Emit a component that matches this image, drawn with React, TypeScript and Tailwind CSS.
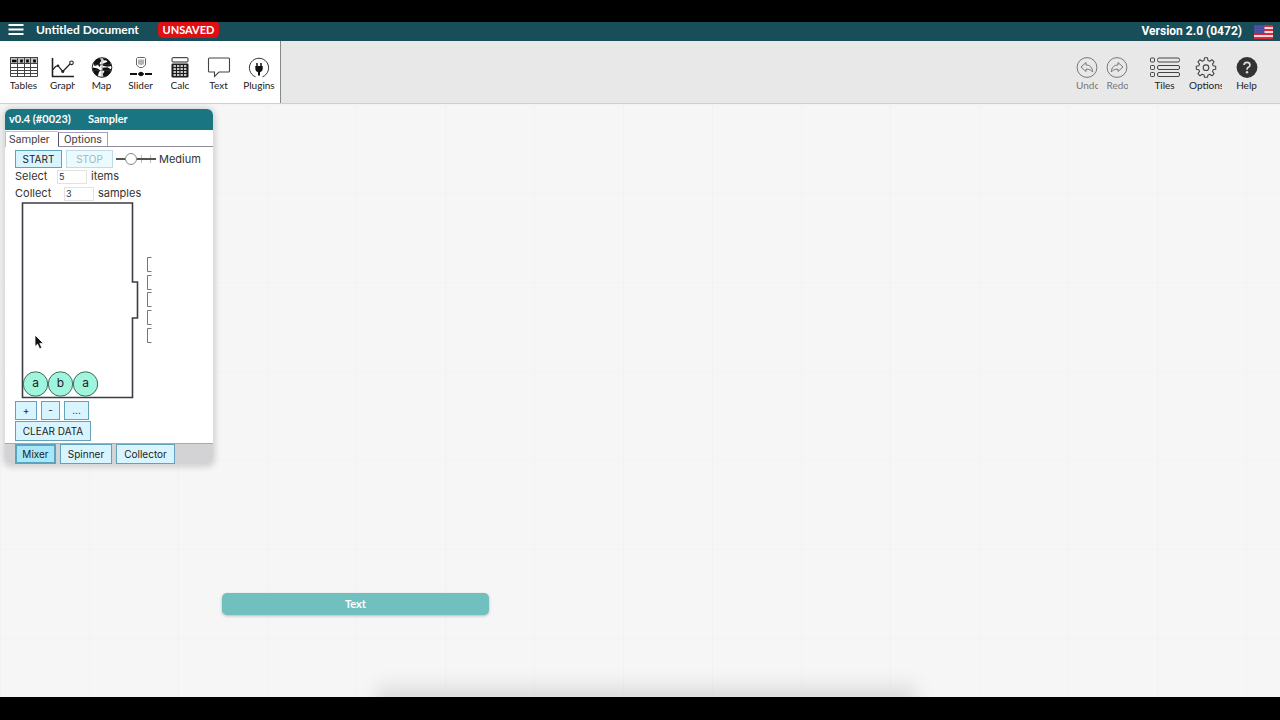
import type { ReactNode } from "react";

function TablesIcon() {
  return (
    <svg width="28" height="21" viewBox="0 0 28 21" fill="none" stroke="#444" strokeWidth="1">
      <rect x="0.5" y="0.5" width="27" height="6" fill="#c4c4c4" />
      <path d="M0.5 6.500h27v13h-27zM0.5 10.500h27M0.5 13.500h27M0.5 16.500h27M7.500 0.500v19M14.500 0.500v19M20.500 0.500v19" />
      <path d="M2 4h4.500M11.500 2.500v3M17.500 2.500v3M24.500 2.500v3" stroke="#000" strokeWidth="2.600" />
    </svg>
  );
}

function GraphIcon() {
  return (
    <svg width="24" height="21" viewBox="0 0 24 21" fill="none" stroke="#222">
      <path d="M1.500 1v18.500h21.500" strokeWidth="1.600" />
      <path d="M2 12.500 4.500 9.500 7 8.700 11.700 14.500 19 7" strokeWidth="1.200" />
      <circle cx="7" cy="8.800" r="1.200" fill="#222" stroke="none" />
      <circle cx="11.800" cy="14.400" r="1.500" fill="#222" stroke="none" />
      <circle cx="20.500" cy="5.800" r="1.800" strokeWidth="1.100" fill="#fff" />
    </svg>
  );
}

function MapIcon() {
  return (
    <svg width="22" height="21" viewBox="0 0 22 21">
      <circle cx="11" cy="10.500" r="9.800" fill="#fff" stroke="#222" strokeWidth="1" />
      <path
        fill="#111"
        d="M8.500 1 5 2.800 2.300 6.500 3.500 9 7 8l1.500 2 1.200-2L8.500 6.200l1.700-2.300L9.500 2zM12 1l.6 2.500 2.400-.3 1.500 1.600-3 1.200-1.800.7.2 2.100 3.400.7H18l2.400-.8L18.500 4.200l-3-2.500zM1.800 10.500l4 .8 3.500 2-1.700 2.700L7 19.300 3.800 17 1.800 13.500zM11.500 10.800l5-.5 3 2 .9-.8-1 4-3 3.200-3.900 1.300-.7-3 1.600-2.400-2-1.800z"
      />
      <path d="M2.500 7.500h17M2 13.500h18M11 1v19" fill="none" stroke="#444" strokeWidth="0.500" />
    </svg>
  );
}

function SliderIcon() {
  return (
    <svg width="24" height="21" viewBox="0 0 24 21" fill="none" stroke="#555">
      <path d="M8.500 0.500h7l1 1v6.500l-3 2.500h-3l-3-2.500v-6.500z" strokeWidth="0.900" />
      <path d="M10 2.500v5M12 2.500v5.500M14 2.500v5" strokeWidth="0.900" />
      <path d="M1 17h7M16 17h7" stroke="#111" strokeWidth="2" />
      <path d="M9 17h6" stroke="#111" strokeWidth="1.500" />
      <circle cx="12" cy="17" r="2.300" fill="#111" stroke="none" />
    </svg>
  );
}

function CalcIcon() {
  return (
    <svg width="18" height="21" viewBox="0 0 18 21">
      <rect x="1" y="0.700" width="16" height="4.300" rx="1" fill="#fff" stroke="#222" />
      <rect x="0.500" y="6.500" width="17" height="14" rx="1.200" fill="#1c1c1c" />
      <path d="M2.500 9h13M2.500 12h13M2.500 15h13M2.500 18h13" stroke="#fff" strokeWidth="1.700" strokeDasharray="2.400 1.100" />
    </svg>
  );
}

function TextIcon() {
  return (
    <svg width="24" height="21" viewBox="0 0 24 21" fill="none" stroke="#444">
      <path d="M2.500 1h19q1 0 1 1v12q0 1-1 1H12L7.500 19.500V15H2.500q-1 0-1-1V2q0-1 1-1z" strokeWidth="1.100" />
    </svg>
  );
}

function PluginsIcon() {
  return (
    <svg width="22" height="21" viewBox="0 0 22 21">
      <path d="M7.500 19.800A9.600 9.600 0 1 1 14.500 19.800" fill="none" stroke="#333" strokeWidth="1" />
      <path d="M9 6v4M13 6v4" stroke="#111" strokeWidth="1.500" />
      <path d="M7.300 9h7.400v3q0 2.500-2.700 3.200V18.500h-2v-3.300q-2.700-.7-2.700-3.200z" fill="#111" />
    </svg>
  );
}

function ArrowIcon({ flip = false }: { flip?: boolean }) {
  return (
    <svg width="22" height="21" viewBox="0 0 22 21" fill="none" stroke="#777" strokeWidth="1">
      <circle cx="11" cy="10.500" r="9.900" />
      <path
        strokeLinejoin="round"
        transform={flip ? "matrix(-1 0 0 1 22 0)" : undefined}
        d="M5 10 10 5.500v2.500c4 0 6.500 2.500 6.700 7-1.500-2-3.700-3-6.700-2.800V14.500z"
      />
    </svg>
  );
}

function TilesIcon() {
  return (
    <svg width="30" height="21" viewBox="0 0 30 21" fill="none" stroke="#444" strokeWidth="1">
      {[1.5, 9, 16].map((y) => (
        <g key={y}>
          <rect x="0.500" y={y - 0.5} width="4" height="4" rx="0.800" />
          <rect x="7.500" y={y - 0.5} width="22" height="4" rx="1.500" />
        </g>
      ))}
    </svg>
  );
}

function GearIcon() {
  return (
    <svg width="22" height="21" viewBox="0 0.500 22 21" fill="none" stroke="#444" strokeWidth="1.100" strokeLinejoin="round">
      <path d="M9.500 1.300h3l.5 2.800 1.700.7 2.300-1.600 2.100 2.100-1.600 2.300.7 1.700 2.500.4v3l-2.500.5-.7 1.700 1.600 2.300-2.100 2.100-2.300-1.600-1.700.7-.5 2.400h-3L9 18.400l-1.700-.7L5 19.300l-2.100-2.100 1.600-2.300-.7-1.700-2.500-.5v-3l2.500-.4.7-1.700-1.600-2.300L5 3.200l2.300 1.600L9 4.100z" />
      <circle cx="11" cy="11.200" r="2.800" />
    </svg>
  );
}

function HelpIcon() {
  return (
    <svg width="22" height="21" viewBox="0 0.500 22 21" fill="none">
      <circle cx="11" cy="11" r="10.400" fill="#333" />
      <path d="M8 8.500Q8.200 5.800 11 5.800T14 8.400Q14 10 12.300 10.800 11 11.500 11 13.200" stroke="#ddd" strokeWidth="1.700" />
      <circle cx="11" cy="15.800" r="1.200" fill="#ddd" />
    </svg>
  );
}

function Flag() {
  return (
    <svg width="19" height="14" viewBox="0 0 20 14" preserveAspectRatio="none">
      <rect width="20" height="14" fill="#f3d9dc" />
      <path d="M0 1h20M0 5h20M0 9h20M0 13h20" stroke="#d92a3c" strokeWidth="2" />
      <rect width="11" height="9" fill="#4a4a9c" />
      <path d="M1 2h9M1 4.500h9M1 7h9" stroke="#7474b8" strokeWidth="0.700" strokeDasharray="1 1" />
    </svg>
  );
}

type ToolProps = { label: string; icon: ReactNode; width: string; labelWidth?: string; muted?: boolean };

function Tool({ label, icon, width, labelWidth = "", muted = false }: ToolProps) {
  return (
    <button type="button" className={`flex flex-col items-center ${width}`}>
      {icon}
      <span
        className={`block overflow-hidden text-left text-[10px] leading-[14px] whitespace-nowrap ${labelWidth} ${
          muted ? "text-[#777]" : "text-[#222]"
        }`}
      >
        {label}
      </span>
    </button>
  );
}

const plainButton = "border border-[#62a3bb] bg-[#d8f5ff] text-[10px] text-[#222] whitespace-nowrap";

function Mixer() {
  const balls = [
    { x: 20.5, label: "a" },
    { x: 45.5, label: "b" },
    { x: 70.5, label: "a" },
  ];
  return (
    <svg width="140" height="197" viewBox="0 0 140 197" className="block">
      <path d="M7.500 1H117.500V80H122.500V116H117.500V195.500H7.500Z" fill="#fff" stroke="#3c3c44" strokeWidth="1.600" />
      {[56, 74, 91, 109, 127].map((y) => (
        <path key={y} d={`M136.500 ${y - 0.5}h-4v14h4`} fill="none" stroke="#777" strokeWidth="1" />
      ))}
      {balls.map((ball) => (
        <g key={ball.x}>
          <circle cx={ball.x} cy="182" r="12.200" fill="#a0f6dc" stroke="#3f6b60" strokeWidth="1" />
          <text x={ball.x} y="185" textAnchor="middle" fontSize="12" fill="#222">
            {ball.label}
          </text>
        </g>
      ))}
    </svg>
  );
}

function SamplerWindow() {
  return (
    <section
      aria-label="Sampler"
      className="absolute top-[5px] left-[5px] w-52 overflow-hidden rounded-md bg-white font-['Inter',sans-serif] text-[11px] text-[#333] shadow-[0_1px_6px_2px_rgba(0,0,0,0.16)]"
    >
      <header className="flex h-[21px] items-center bg-[#1a7582] pl-1 font-['Lato',sans-serif] text-[11px] font-bold text-white">
        <span className="w-[79px]">v0.4 (#0023)</span>
        <h2>Sampler</h2>
      </header>
      <div role="tablist" className="flex h-[17px] items-end border-b border-[#8f8b9c] font-['Roboto',sans-serif] text-[#444]">
        <button type="button" role="tab" aria-selected="true" className="-mb-px h-4 w-[53px] border-t border-l border-[#c5bed2] bg-white pl-[3px] text-left leading-[14px]">
          Sampler
        </button>
        <button type="button" role="tab" aria-selected="false" className="h-[14px] w-[50px] border border-b-0 border-[#a79dc0] border-l-[#554f68] leading-[14px]">
          Options
        </button>
      </div>
      <div className="px-[10px] pt-[3px] pb-[2px]">
        <div className="flex h-[18px] items-center">
          <button type="button" className={`${plainButton} h-[18px] w-[47px]`}>START</button>
          <button type="button" disabled className="ml-1 h-[18px] w-[47px] border border-[#bfdbe3] bg-[#eafaff] text-[10px] text-[#a5b5b9]">
            STOP
          </button>
          <input
            id="speed"
            type="range"
            min="0"
            max="3"
            defaultValue="1"
            aria-label="Speed"
            className="ml-[3px] h-[14px] w-10 appearance-none bg-[linear-gradient(#555,#555),linear-gradient(#bbb,#bbb),linear-gradient(#bbb,#bbb)] bg-[length:100%_2px,1px_8px,1px_8px] bg-[position:0_center,25px_center,34px_center] bg-no-repeat [&::-webkit-slider-thumb]:h-3 [&::-webkit-slider-thumb]:w-3 [&::-webkit-slider-thumb]:appearance-none [&::-webkit-slider-thumb]:rounded-full [&::-webkit-slider-thumb]:border [&::-webkit-slider-thumb]:border-[#888] [&::-webkit-slider-thumb]:bg-white"
          />
          <label htmlFor="speed" className="ml-[3px]">Medium</label>
        </div>
        <div className="flex h-[17px] items-center">
          <label htmlFor="items" className="w-[42px]">Select</label>
          <input id="items" defaultValue="5" className="h-[14px] w-[30px] border border-[#e2e2e2] px-px text-[9px]" />
          <span className="ml-1">items</span>
        </div>
        <div className="flex h-[17px] items-center">
          <label htmlFor="samples" className="w-[49px]">Collect</label>
          <input id="samples" defaultValue="3" className="h-[14px] w-[30px] border border-[#e2e2e2] px-px text-[9px]" />
          <span className="ml-1">samples</span>
        </div>
        <Mixer />
        <div className="mt-[2px] flex gap-1">
          <button type="button" className={`${plainButton} h-[19px] w-[22px]`}>+</button>
          <button type="button" className={`${plainButton} h-[19px] w-[19px]`}>-</button>
          <button type="button" className={`${plainButton} h-[19px] w-[25px]`}>...</button>
        </div>
        <button type="button" className={`${plainButton} mt-px block h-5 w-[76px]`}>CLEAR DATA</button>
      </div>
      <footer className="flex h-[21px] items-start gap-1 border-t border-[#a9a9b0] bg-[#d3d3d6] pl-[10px]">
        <button type="button" className="h-5 w-[41px] border-2 border-[#5aa5bd] bg-[#a6e8fa] text-[10px] text-[#222]">Mixer</button>
        <button type="button" className={`${plainButton} h-5 w-[52px]`}>Spinner</button>
        <button type="button" className={`${plainButton} h-5 w-[59px]`}>Collector</button>
      </footer>
    </section>
  );
}

export default function App() {
  return (
    <div className="flex min-h-screen flex-col bg-black pt-[22px] pb-[23px] font-['Lato','Open_Sans',sans-serif]">
      <header className="flex h-[19px] items-center bg-[#184e5a] pr-[7px] pl-2 text-white">
        <button type="button" aria-label="Menu" className="-mt-1">
          <svg width="16" height="13" viewBox="0 0 16 13" stroke="#fff" strokeWidth="2">
            <path d="M0.500 2h15M0.500 6.500h15M0.500 11h15" />
          </svg>
        </button>
        <h1 className="-mt-[3px] ml-3 w-[122px] text-[12px] font-bold whitespace-nowrap">Untitled Document</h1>
        <span className="-mt-[3px] flex h-4 w-[61px] items-center justify-center rounded-b-[5px] rounded-t-[3px] bg-[#e00f14] text-[11px] font-bold">
          UNSAVED
        </span>
        <span className="-mt-px ml-auto font-['Roboto',sans-serif] text-[12px] font-bold">Version 2.0 (0472)</span>
        <button type="button" aria-label="Language" className="ml-3">
          <Flag />
        </button>
      </header>

      <nav className="flex h-[63px] justify-between border-b border-[#cfcfcf] bg-[#e8e8e8]">
        <div className="flex items-start border-r border-[#888] bg-white pt-4 pl-1">
          <Tool label="Tables" icon={<TablesIcon />} width="w-[39px]" />
          <Tool label="Graph" icon={<GraphIcon />} width="w-[39px]" labelWidth="w-[25px]" />
          <Tool label="Map" icon={<MapIcon />} width="w-[39px]" />
          <Tool label="Slider" icon={<SliderIcon />} width="w-[39px]" />
          <Tool label="Calc" icon={<CalcIcon />} width="w-[39px]" labelWidth="w-[18px]" />
          <Tool label="Text" icon={<TextIcon />} width="w-[39px]" />
          <Tool label="Plugins" icon={<PluginsIcon />} width="w-[42px]" />
        </div>
        <div className="flex items-start pt-4 pr-[13px]">
          <Tool label="Undo" icon={<ArrowIcon />} width="w-[30px]" labelWidth="w-[22px]" muted />
          <Tool label="Redo" icon={<ArrowIcon flip />} width="w-[30px]" labelWidth="w-[21px]" muted />
          <div className="ml-3 flex">
            <Tool label="Tiles" icon={<TilesIcon />} width="w-[41px]" />
            <Tool label="Options" icon={<GearIcon />} width="w-[41px]" labelWidth="w-[33px]" />
            <Tool label="Help" icon={<HelpIcon />} width="w-[41px]" />
          </div>
        </div>
      </nav>

      <main className="relative flex-1 overflow-hidden bg-[#f6f6f6] bg-[linear-gradient(to_right,#f2f2f2_1px,transparent_1px),linear-gradient(#f3f3f3_1px,transparent_1px)] bg-[length:89px_89px]">
        <SamplerWindow />
        <section
          aria-label="Text"
          className="absolute top-[489px] left-[222px] flex h-[22px] w-[267px] items-center justify-center rounded-[5px] bg-[#70c0c0] text-[11px] font-bold text-white shadow-[0_1px_3px_rgba(0,0,0,0.25)]"
        >
          Text
        </section>
        <div className="absolute -bottom-3 left-[30%] h-4 w-[41%] bg-[#ddd] shadow-[0_0_16px_8px_rgba(0,0,0,0.09)] blur-[6px]" />
        <svg width="12" height="17" viewBox="0 0 12 17" className="absolute top-[230px] left-[34px]">
          <path d="M1 1v11.500l2.600-2.300 2 4.600 2.200-1-2-4.400h3.600z" fill="#111" stroke="#fff" strokeWidth="0.800" />
        </svg>
      </main>
    </div>
  );
}
